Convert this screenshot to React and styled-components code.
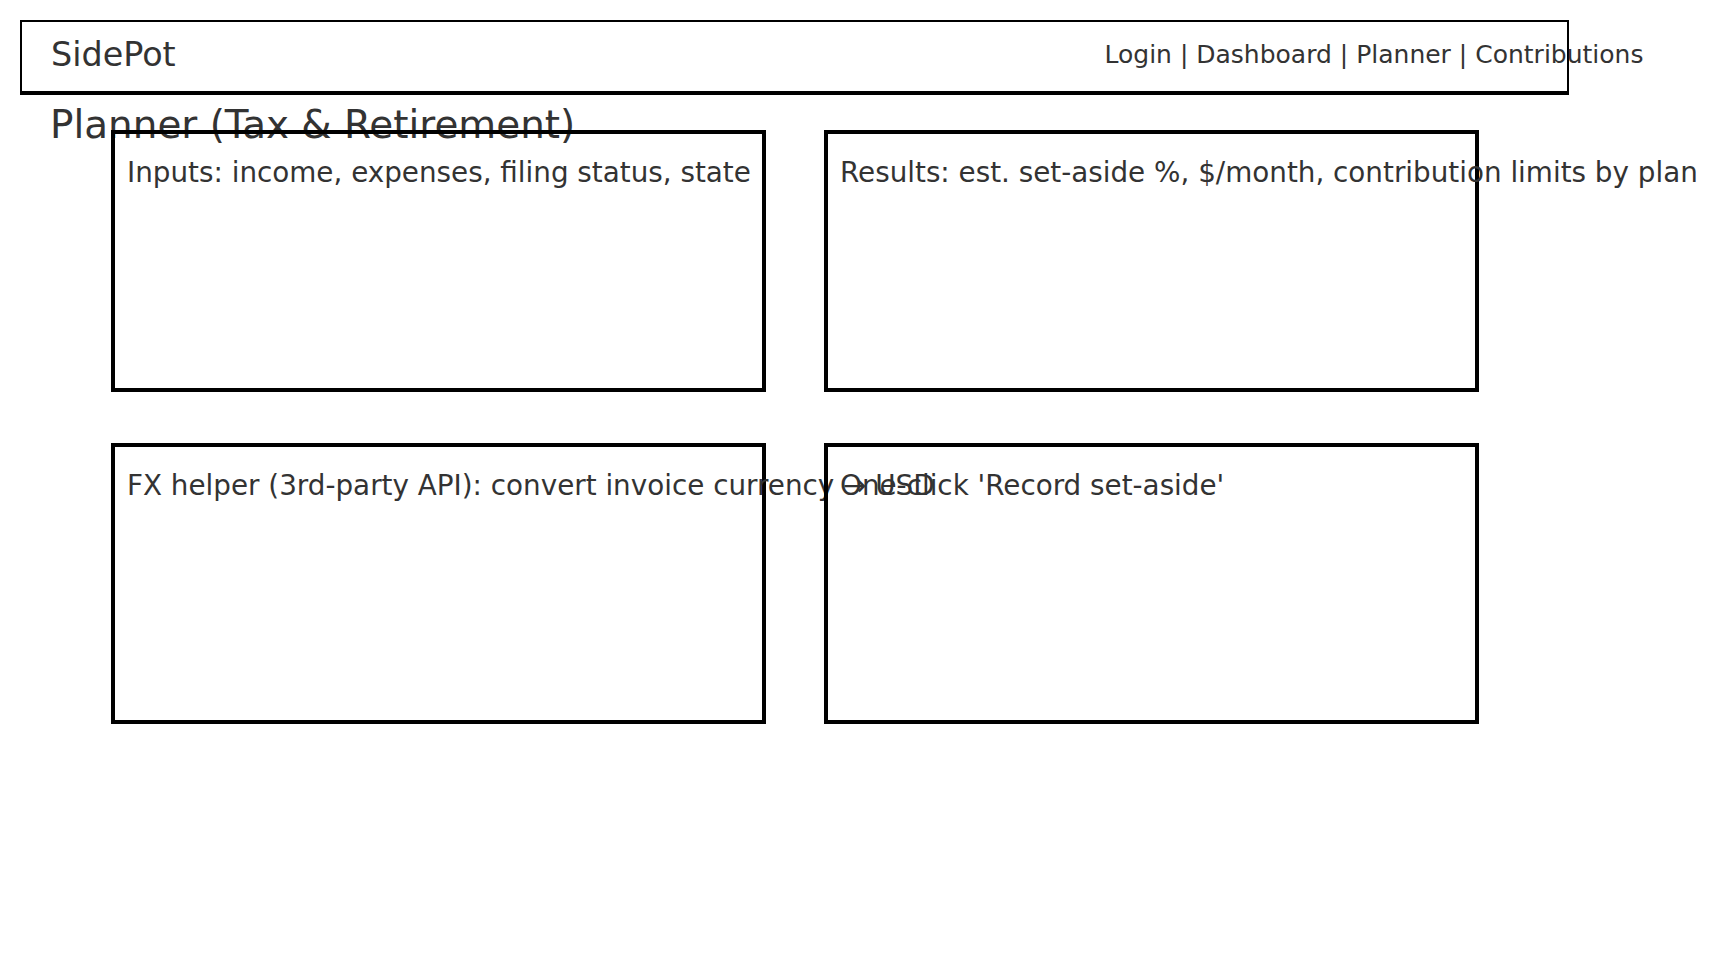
import React from "react";
import styled, { createGlobalStyle } from "styled-components";

const GlobalStyle = createGlobalStyle`
  html, body { background: #fff; }
  body {
    margin: 8px;
    font-family: "DejaVu Sans", "Liberation Sans", sans-serif;
    color: #333;
  }
`;

const Page = styled.div`
  padding: 12px;
`;

const Header = styled.header`
  box-sizing: border-box;
  width: 1549px;
  height: 75px;
  border: 2px solid #000;
  border-bottom-width: 4px;
  display: grid;
  grid-template-columns: 1053.5px auto;
  align-items: center;
  padding: 0 0 5px 29px;
  overflow: visible;
`;

const Logo = styled.div`
  font-size: 33.4px;
  line-height: normal;
  white-space: nowrap;
`;

const Nav = styled.nav`
  font-size: 25px;
  line-height: normal;
  white-space: nowrap;
`;

const Title = styled.h1`
  margin: 7px 0 0 30px;
  font-size: 38.9px;
  font-weight: normal;
  line-height: normal;
  white-space: nowrap;
`;

const Grid = styled.div`
  margin: -17px 0 0 91px;
  display: grid;
  grid-template-columns: 655px 655px;
  grid-template-rows: 262px 281px;
  column-gap: 58px;
  row-gap: 51px;
`;

const Card = styled.section`
  box-sizing: border-box;
  border: 4px solid #000;
  padding: 22px 12px;
  font-size: 27.8px;
  line-height: normal;
  white-space: nowrap;
  overflow: visible;
`;

const cards = [
  "Inputs: income, expenses, filing status, state",
  "Results: est. set-aside %, $/month, contribution limits by plan",
  "FX helper (3rd-party API): convert invoice currency \u2192 USD",
  "One-click 'Record set-aside'",
];

export default function App() {
  return (
    <>
      <GlobalStyle />
      <Page>
        <Header>
          <Logo>SidePot</Logo>
          <Nav>Login | Dashboard | Planner | Contributions</Nav>
        </Header>
        <Title>Planner (Tax &amp; Retirement)</Title>
        <Grid>
          {cards.map((c) => (
            <Card key={c}>{c}</Card>
          ))}
        </Grid>
      </Page>
    </>
  );
}
